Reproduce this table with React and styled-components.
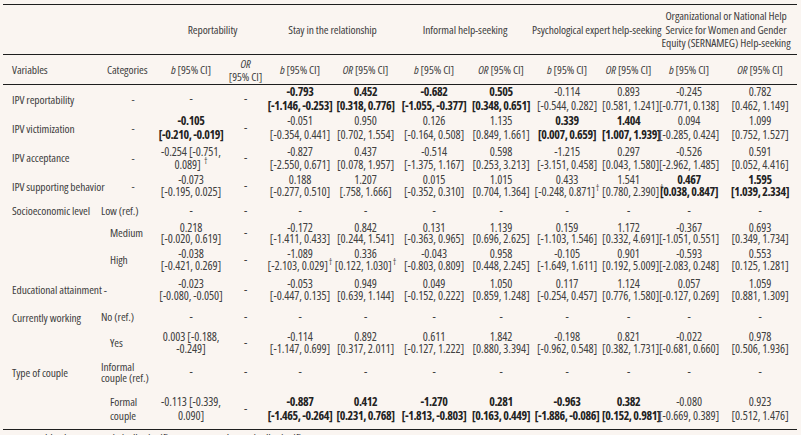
import React from "react";
import styled, { createGlobalStyle } from "styled-components";

const Global = createGlobalStyle`
  body {
    margin: 0;
    background: #faf5f1;
  }
`;

// helpers for the cell data
const D = { dash: true };
const V = (v, ci, opts = {}) => ({ lines: [v, ci], ...opts });
const L = (a, b, opts = {}) => ({ lines: [a, b], ...opts });
const allDash = Array(10).fill(D);

const groups = [
  ["Reportability"],
  ["Stay in the relationship"],
  ["Informal help-seeking"],
  ["Psychological expert help-seeking"],
  [
    "Organizational or National Help",
    "Service for Women and Gender",
    "Equity (SERNAMEG) Help-seeking",
  ],
];

const widths = [97, 58, 66, 43, 66, 65, 72, 62, 70, 53, 68, 74];

const rows = [
  {
    label: "IPV reportability",
    cat: "-",
    h: 29,
    lh: 14,
    cells: [
      D,
      D,
      V("-0.793", "[-1.146, -0.253]", { bold: true }),
      V("0.452", "[0.318, 0.776]", { bold: true }),
      V("-0.682", "[-1.055, -0.377]", { bold: true }),
      V("0.505", "[0.348, 0.651]", { bold: true }),
      V("-0.114", "[-0.544, 0.282]"),
      V("0.893", "[0.581, 1.241]"),
      V("-0.245", "[-0.771, 0.138]"),
      V("0.782", "[0.462, 1.149]"),
    ],
  },
  {
    label: "IPV victimization",
    cat: "-",
    h: 29,
    lh: 14,
    cells: [
      V("-0.105", "[-0.210, -0.019]", { bold: true }),
      D,
      V("-0.051", "[-0.354, 0.441]"),
      V("0.950", "[0.702, 1.554]"),
      V("0.126", "[-0.164, 0.508]"),
      V("1.135", "[0.849, 1.661]"),
      V("0.339", "[0.007, 0.659]", { bold: true }),
      V("1.404", "[1.007, 1.939]", { bold: true }),
      V("0.094", "[-0.285, 0.424]"),
      V("1.099", "[0.752, 1.527]"),
    ],
  },
  {
    label: "IPV acceptance",
    cat: "-",
    h: 30,
    lh: 13,
    cells: [
      L("-0.254 [-0.751,", "0.089] ", { dag: true }),
      D,
      V("-0.827", "[-2.550, 0.671]"),
      V("0.437", "[0.078, 1.957]"),
      V("-0.514", "[-1.375, 1.167]"),
      V("0.598", "[0.253, 3.213]"),
      V("-1.215", "[-3.151, 0.458]"),
      V("0.297", "[0.043, 1.580]"),
      V("-0.526", "[-2.962, 1.485]"),
      V("0.591", "[0.052, 4.416]"),
    ],
  },
  {
    label: "IPV supporting behavior",
    cat: "-",
    h: 27,
    lh: 12.5,
    cells: [
      V("-0.073", "[-0.195, 0.025]"),
      D,
      V("0.188", "[-0.277, 0.510]"),
      V("1.207", "[.758, 1.666]"),
      V("0.015", "[-0.352, 0.310]"),
      V("1.015", "[0.704, 1.364]"),
      V("0.433", "[-0.248, 0.871]", { dag: true }),
      V("1.541", "[0.780, 2.390]", { dag: true }),
      V("0.467", "[0.038, 0.847]", { bold: true }),
      V("1.595", "[1.039, 2.334]", { bold: true }),
    ],
  },
  { label: "Socioeconomic level", cat: "Low (ref.)", ref: true, h: 22, cells: allDash },
  {
    label: "",
    cat: "Medium",
    h: 22,
    lh: 11.5,
    cells: [
      V("0.218", "[-0.020, 0.619]"),
      D,
      V("-0.172", "[-1.411, 0.433]"),
      V("0.842", "[0.244, 1.541]"),
      V("0.131", "[-0.363, 0.965]"),
      V("1.139", "[0.696, 2.625]"),
      V("0.159", "[-1.103, 1.546]"),
      V("1.172", "[0.332, 4.691]"),
      V("-0.367", "[-1.051, 0.551]"),
      V("0.693", "[0.349, 1.734]"),
    ],
  },
  {
    label: "",
    cat: "High",
    h: 30,
    lh: 11.5,
    cells: [
      V("-0.038", "[-0.421, 0.269]"),
      D,
      V("-1.089", "[-2.103, 0.029]", { dag: true }),
      V("0.336", "[0.122, 1.030]", { dag: true }),
      V("-0.043", "[-0.803, 0.809]"),
      V("0.958", "[0.448, 2.245]"),
      V("-0.105", "[-1.649, 1.611]"),
      V("0.901", "[0.192, 5.009]"),
      V("-0.593", "[-2.083, 0.248]"),
      V("0.553", "[0.125, 1.281]"),
    ],
  },
  {
    label: "Educational attainment -",
    cat: "",
    h: 30,
    lh: 11.5,
    cells: [
      V("-0.023", "[-0.080, -0.050]"),
      D,
      V("-0.053", "[-0.447, 0.135]"),
      V("0.949", "[0.639, 1.144]"),
      V("0.049", "[-0.152, 0.222]"),
      V("1.050", "[0.859, 1.248]"),
      V("0.117", "[-0.254, 0.457]"),
      V("1.124", "[0.776, 1.580]"),
      V("0.057", "[-0.127, 0.269]"),
      V("1.059", "[0.881, 1.309]"),
    ],
  },
  { label: "Currently working", cat: "No (ref.)", ref: true, h: 25, cells: allDash },
  {
    label: "",
    cat: "Yes",
    h: 26,
    lh: 11.5,
    cells: [
      L("0.003 [-0.188,", "-0.249]"),
      D,
      V("-0.114", "[-1.147, 0.699]"),
      V("0.892", "[0.317, 2.011]"),
      V("0.611", "[-0.127, 1.222]"),
      V("1.842", "[0.880, 3.394]"),
      V("-0.198", "[-0.962, 0.548]"),
      V("0.821", "[0.382, 1.731]"),
      V("-0.022", "[-0.681, 0.660]"),
      V("0.978", "[0.506, 1.936]"),
    ],
  },
  {
    label: "Type of couple",
    cat: ["Informal", "couple (ref.)"],
    ref: true,
    h: 33,
    lh: 11.5,
    cells: allDash,
  },
  {
    label: "",
    cat: ["Formal", "couple"],
    h: 41,
    lh: 14,
    cells: [
      L("-0.113 [-0.339,", "0.090]"),
      D,
      V("-0.887", "[-1.465, -0.264]", { bold: true }),
      V("0.412", "[0.231, 0.768]", { bold: true }),
      V("-1.270", "[-1.813, -0.803]", { bold: true }),
      V("0.281", "[0.163, 0.449]", { bold: true }),
      V("-0.963", "[-1.886, -0.086]", { bold: true }),
      V("0.382", "[0.152, 0.981]", { bold: true }),
      V("-0.080", "[-0.669, 0.389]"),
      V("0.923", "[0.512, 1.476]"),
    ],
  },
];

const ValueCell = ({ cell, lh }) => {
  if (cell.dash) return <Val $lh={lh}>-</Val>;
  return (
    <Val $lh={lh} $bold={cell.bold}>
      {cell.lines.map((t, i) => (
        <Ln key={i}>
          {t}
          {cell.dag && i === cell.lines.length - 1 && <Dag>†</Dag>}
        </Ln>
      ))}
    </Val>
  );
};

const Coef = ({ or, wrap }) =>
  or ? (
    <>
      <I>OR</I>
      {wrap ? <br /> : " "}[95% CI]
    </>
  ) : (
    <>
      <I>b</I> [95% CI]
    </>
  );

export default function App() {
  return (
    <Page>
      <Global />
      <Table>
        <colgroup>
          {widths.map((w, i) => (
            <col key={i} style={{ width: w }} />
          ))}
        </colgroup>
        <thead>
          <GroupRow>
            <GroupHead colSpan={2} />
            {groups.map((g, i) => (
              <GroupHead key={i} colSpan={2}>
                {g.map((t, j) => (
                  <Ln key={j}>{t}</Ln>
                ))}
              </GroupHead>
            ))}
          </GroupRow>
          <SubRow>
            <SubHead $align="left" $pl={9}>
              Variables
            </SubHead>
            <SubHead $align="left" $pl={7}>
              Categories
            </SubHead>
            {groups.map((g, i) => (
              <React.Fragment key={i}>
                <SubHead>
                  <Coef />
                </SubHead>
                <SubHead>
                  <Coef or wrap={i === 0} />
                </SubHead>
              </React.Fragment>
            ))}
          </SubRow>
        </thead>
        <tbody>
          {rows.map((r, i) => (
            <Row key={i} $h={r.h}>
              <VarCell>{r.label}</VarCell>
              <CatCell
                $lh={r.lh}
                $align={r.cat === "-" ? "center" : "left"}
                $pl={r.cat === "-" ? 8 : r.ref ? 1 : 10}
              >
                {Array.isArray(r.cat)
                  ? r.cat.map((t, j) => <Ln key={j}>{t}</Ln>)
                  : r.cat}
              </CatCell>
              {r.cells.map((c, j) => (
                <ValueCell key={j} cell={c} lh={r.lh} />
              ))}
            </Row>
          ))}
        </tbody>
      </Table>
      <Note>
        <I>Note.</I> Bold values are statistically significant (<I>p</I> &lt; .05);
        † marginally significant (<I>p</I> &lt; .10).
      </Note>
    </Page>
  );
}

const Page = styled.div`
  padding: 4px 0 0 3px;
  font-family: "Open Sans", "Roboto Condensed", sans-serif;
  font-stretch: 75%;
  font-size: 11.5px;
  letter-spacing: -0.1px;
  color: #404040;
`;

const Table = styled.table`
  width: 794px;
  border-collapse: collapse;
  table-layout: fixed;
  border-top: 1px solid #1e1e1e;
  border-bottom: 1px solid #1e1e1e;
`;

const GroupRow = styled.tr`
  height: 50px;
`;

const GroupHead = styled.th`
  padding: 0;
  font-weight: normal;
  line-height: 13.5px;
  text-align: center;
  vertical-align: middle;
  white-space: nowrap;
  border-bottom: 1px solid #1e1e1e;
`;

const SubRow = styled.tr`
  height: 30px;
`;

const SubHead = styled.th`
  padding: 0 0 0 ${(p) => p.$pl || 0}px;
  font-weight: normal;
  line-height: 13px;
  text-align: ${(p) => p.$align || "center"};
  vertical-align: middle;
  white-space: nowrap;
  border-bottom: 1px solid #1e1e1e;
`;

const Row = styled.tr`
  height: ${(p) => p.$h}px;
`;

const VarCell = styled.td`
  padding: 0 0 0 9px;
  white-space: nowrap;
  overflow: visible;
  vertical-align: middle;
  line-height: 13px;
`;

const CatCell = styled.td`
  padding: 0 0 0 ${(p) => p.$pl}px;
  text-align: ${(p) => p.$align};
  vertical-align: middle;
  white-space: nowrap;
  line-height: ${(p) => p.$lh || 12}px;
`;

const Val = styled.td`
  padding: 0;
  text-align: center;
  vertical-align: middle;
  white-space: nowrap;
  font-size: 12px;
  line-height: ${(p) => p.$lh || 12}px;
  font-weight: ${(p) => (p.$bold ? 700 : 400)};
  letter-spacing: ${(p) => (p.$bold ? "-0.4px" : "-0.1px")};
  color: ${(p) => (p.$bold ? "#222" : "#404040")};
`;

const Ln = styled.span`
  display: block;
`;

const Dag = styled.sup`
  font-size: 8px;
  line-height: 0;
  margin-left: 1px;
  letter-spacing: 0;
`;

const I = styled.i`
  font-style: italic;
`;

const Note = styled.p`
  margin: 3px 0 0 9px;
  font-size: 12px;
  line-height: 14px;
`;
